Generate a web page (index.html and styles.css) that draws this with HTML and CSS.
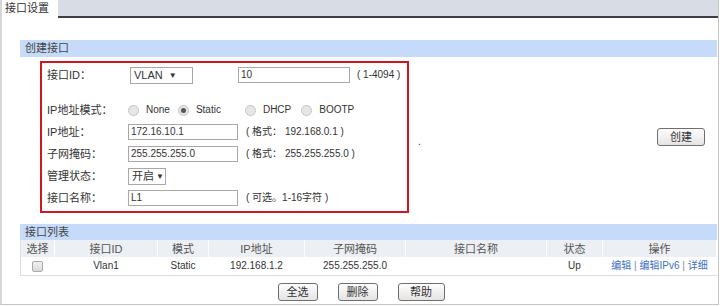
FILE: index.html
```html
<!DOCTYPE html>
<html lang="zh-CN">
<head>
  <meta charset="UTF-8">
  <title>接口设置</title>
  <link rel="stylesheet" href="styles.css">
</head>
<body>
  <div class="page">
    <div class="tabs">
      <div class="tab">接口设置</div>
      <div class="tab-rest"></div>
    </div>

    <div class="content">
      <!-- 创建接口 -->
      <div class="section-title">创建接口</div>
      <div class="create">
        <div class="form-box">
          <div class="row row-first">
            <span class="label">接口ID：</span>
            <span class="select sel-vlan">VLAN <i>▼</i></span>
            <span class="input in-id">10</span>
            <span class="hint">( 1-4094 )</span>
          </div>
          <div class="row row-mode">
            <span class="label">IP地址模式：</span>
            <span class="radio"></span><span class="rlabel r-none">None</span>
            <span class="radio checked"></span><span class="rlabel r-static">Static</span>
            <span class="radio"></span><span class="rlabel r-dhcp">DHCP</span>
            <span class="radio"></span><span class="rlabel">BOOTP</span>
          </div>
          <div class="row">
            <span class="label">IP地址：</span>
            <span class="input">172.16.10.1</span>
            <span class="hint">( 格式： 192.168.0.1 )</span>
          </div>
          <div class="row">
            <span class="label">子网掩码：</span>
            <span class="input">255.255.255.0</span>
            <span class="hint">( 格式： 255.255.255.0 )</span>
          </div>
          <div class="row">
            <span class="label">管理状态：</span>
            <span class="select sel-state">开启 <i>▼</i></span>
          </div>
          <div class="row">
            <span class="label">接口名称：</span>
            <span class="input">L1</span>
            <span class="hint">( 可选。1-16字符 )</span>
          </div>
        </div>
        <div class="side">
          <span class="dot">.</span>
          <button class="btn btn-create">创建</button>
        </div>
      </div>

      <!-- 接口列表 -->
      <div class="section-title list-title">接口列表</div>
      <table class="list">
        <thead>
          <tr>
            <th class="c-sel">选择</th>
            <th class="c-id">接口ID</th>
            <th class="c-mode">模式</th>
            <th class="c-ip">IP地址</th>
            <th class="c-mask">子网掩码</th>
            <th class="c-name">接口名称</th>
            <th class="c-state">状态</th>
            <th class="c-op">操作</th>
          </tr>
        </thead>
        <tbody>
          <tr>
            <td><span class="checkbox"></span></td>
            <td>Vlan1</td>
            <td>Static</td>
            <td>192.168.1.2</td>
            <td>255.255.255.0</td>
            <td></td>
            <td>Up</td>
            <td class="ops"><a>编辑</a> | <a>编辑IPv6</a> | <a>详细</a></td>
          </tr>
        </tbody>
      </table>

      <div class="actions">
        <button class="btn btn-w40">全选</button>
        <button class="btn btn-w40">删除</button>
        <button class="btn btn-w47">帮助</button>
      </div>
    </div>
  </div>
</body>
</html>
```

FILE: styles.css
```css
body {
  margin: 0;
  font-family: "Liberation Sans", "Noto Sans CJK SC", sans-serif;
  font-size: 10px;
  line-height: 16px;
  color: #333;
  background: #fff;
}
.page {
  width: 719px;
  height: 305px;
  box-sizing: border-box;
  border-left: 2px solid #d6d6d6;
  border-right: 1px solid #c4c4c4;
  border-bottom: 1px solid #c4c4c4;
  overflow: hidden;
}
.tabs {
  display: flex;
  height: 18px;
  background: #d8dce4;
}
.tab {
  width: 53px;
  height: 18px;
  line-height: 17px;
  padding-left: 3px;
  font-size: 11px;
  background: #fff;
  color: #333;
}
.tab-rest {
  flex: 1;
  border-bottom: 2px solid #3a3f45;
  height: 16px;
}
.content {
  padding: 22px 1px 0 18px;
}
.section-title {
  height: 17px;
  line-height: 17px;
  padding-left: 5px;
  font-size: 11px;
  background: #c5dbf9;
  color: #444;
}
.create {
  display: flex;
  align-items: center;
  margin-top: 4px;
}
.form-box {
  margin-left: 20px;
  width: 369px;
  box-sizing: border-box;
  border: 2px solid #d3151f;
  padding: 1px 0 2px 5px;
}
.row {
  display: flex;
  align-items: center;
  height: 22px;
  white-space: nowrap;
}
.row-first {
  margin-bottom: 13px;
}
.label {
  width: 81px;
  flex-shrink: 0;
  font-size: 11px;
}
.input {
  width: 110px;
  height: 16px;
  line-height: 14px;
  box-sizing: border-box;
  border: 1px solid #a8a8a8;
  padding-left: 2px;
  background: #fff;
  flex-shrink: 0;
}
.in-id {
  width: 112px;
  margin-left: 45px;
}
.hint {
  margin-left: 8px;
}
.row-first .hint {
  margin-left: 7px;
}
.select {
  height: 17px;
  line-height: 15px;
  box-sizing: border-box;
  border: 1px solid #a8a8a8;
  padding-left: 3px;
  background: #fff;
  display: flex;
  align-items: center;
  flex-shrink: 0;
}
.select i {
  font-style: normal;
  font-size: 8px;
  margin-left: 6px;
}
.sel-vlan {
  width: 63px;
  margin-left: 2px;
  font-size: 11px;
}
.sel-state {
  width: 38px;
  padding-left: 3px;
  font-size: 11px;
}
.sel-state i {
  margin-left: 2px;
}
.radio {
  width: 9px;
  height: 9px;
  border-radius: 50%;
  border: 1px solid #c4c4c4;
  background: #e6e6e6;
  position: relative;
  flex-shrink: 0;
}
.row-mode .radio:first-of-type {
  margin-left: 6px;
}
.radio.checked::after {
  content: "";
  position: absolute;
  left: 2px;
  top: 2px;
  width: 5px;
  height: 5px;
  border-radius: 50%;
  background: #555;
}
.rlabel {
  margin-left: 7px;
}
.r-none {
  margin-right: 8px;
}
.r-static {
  margin-right: 24px;
}
.r-dhcp {
  margin-right: 10px;
}
.side {
  flex: 1;
  display: flex;
  align-items: center;
  justify-content: space-between;
  padding: 0 12px 0 9px;
}
.dot {
  margin-top: 10px;
}
.btn {
  font-family: "Liberation Sans", "Noto Sans CJK SC", sans-serif;
  font-size: 11px;
  color: #333;
  height: 18px;
  padding: 0;
  line-height: 16px;
  border: 1px solid #6f6f6f;
  border-radius: 3px;
  background: linear-gradient(#fdfdfd, #e4e4e4);
}
.btn-create {
  width: 48px;
}
.btn-w40 {
  width: 40px;
}
.btn-w47 {
  width: 47px;
}
.list-title {
  margin-top: 11px;
  height: 16px;
  line-height: 16px;
}
.list {
  width: 100%;
  border-collapse: collapse;
  table-layout: fixed;
  border-left: 1px solid #dcdcdc;
  border-bottom: 1px solid #dcdcdc;
}
.list th {
  height: 17px;
  padding: 0;
  font-size: 11px;
  font-weight: normal;
  background: #eceff3;
  border-right: 1px solid #fff;
  color: #555;
  line-height: 16px;
}
.list td {
  height: 18px;
  padding: 0;
  text-align: center;
  white-space: nowrap;
}
.c-sel { width: 33px; }
.c-id { width: 102px; }
.c-mode { width: 50px; }
.c-ip { width: 95px; }
.c-mask { width: 100px; }
.c-name { width: 140px; }
.c-state { width: 55px; }
.checkbox {
  display: inline-block;
  width: 9px;
  height: 9px;
  border: 1px solid #aaa;
  border-radius: 2px;
  background: linear-gradient(#f2f2f2, #d8d8d8);
  vertical-align: middle;
}
.ops {
  color: #7a8aa5;
}
.ops a {
  color: #3b6fc4;
}
.actions {
  display: flex;
  justify-content: center;
  gap: 20px;
  margin-top: 7px;
  padding-right: 15px;
}
```
